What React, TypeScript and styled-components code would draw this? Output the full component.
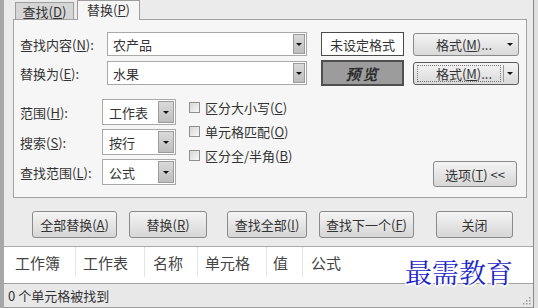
import React from "react";
import styled, { createGlobalStyle } from "styled-components";

const GlobalStyle = createGlobalStyle`
  html, body {
    margin: 0;
    padding: 0;
    background: #e0e0e0;
  }
  body {
    font-family: "Noto Sans CJK SC", "Liberation Sans", sans-serif;
    color: #333;
  }
`;

const Dialog = styled.div`
  position: relative;
  width: 534px;
  height: 308px;
  box-sizing: border-box;
  overflow: hidden;
  background: #ebebeb;
  border-left: 4px solid #a7a7a7;
  border-right: 1px solid #8a8a8a;
  display: flex;
  flex-direction: column;
`;

const TabStrip = styled.div`
  height: 19px;
  padding-left: 11px;
  display: flex;
  align-items: flex-end;
`;

const Tab = styled.div<{ $active?: boolean }>`
  position: relative;
  z-index: 1;
  box-sizing: border-box;
  height: ${(p) => (p.$active ? "20px" : "17px")};
  width: ${(p) => (p.$active ? "63px" : "59px")};
  margin-left: ${(p) => (p.$active ? "3px" : "0")};
  margin-bottom: ${(p) => (p.$active ? "-1px" : "0")};
  background: ${(p) => (p.$active ? "#f6f6f6" : "#d5d5d5")};
  border: 1px solid #9d9d9d;
  border-bottom: none;
  display: flex;
  align-items: center;
  justify-content: center;
  font-size: 13px;
  line-height: 1;
  padding-bottom: ${(p) => (p.$active ? "2px" : "0")};
`;

const U = styled.span`
  text-decoration: underline;
`;

const Panel = styled.div`
  box-sizing: border-box;
  margin-left: 9px;
  width: 514px;
  height: 179px;
  background: #f6f6f6;
  border: 1px solid #a2a2a2;
  padding: 12px 9px 0 6px;
  display: flex;
  flex-direction: column;
`;

const TopRow = styled.div<{ $gap?: number }>`
  display: flex;
  align-items: center;
  height: 24px;
  margin-top: ${(p) => p.$gap ?? 0}px;
`;

const Label = styled.div<{ $w: number }>`
  width: ${(p) => p.$w}px;
  flex: none;
  font-size: 13px;
  white-space: nowrap;
`;

const Combo = styled.div<{ $w: number; $h: number }>`
  box-sizing: border-box;
  width: ${(p) => p.$w}px;
  height: ${(p) => p.$h}px;
  flex: none;
  background: #fff;
  border: 1px solid #a9a9a9;
  display: flex;
  align-items: center;
  padding: 1px;
`;

const ComboText = styled.div<{ $pad: number }>`
  flex: 1;
  padding-left: ${(p) => p.$pad}px;
  font-size: 13px;
  white-space: nowrap;
`;

const DropButton = styled.div<{ $w: number }>`
  box-sizing: border-box;
  width: ${(p) => p.$w}px;
  height: 100%;
  background: linear-gradient(#dadada, #bdbdbd);
  border: 1px solid #9c9c9c;
  display: flex;
  align-items: center;
  justify-content: center;
`;

const Arrow = styled.div`
  width: 0;
  height: 0;
  border-left: 3px solid transparent;
  border-right: 3px solid transparent;
  border-top: 3px solid #111;
`;

const FormatBox = styled.div<{ $preview?: boolean }>`
  box-sizing: border-box;
  margin-left: 14px;
  width: 83px;
  height: ${(p) => (p.$preview ? "26px" : "24px")};
  flex: none;
  background: ${(p) => (p.$preview ? "#9c9c9c" : "#fff")};
  border: ${(p) => (p.$preview ? "2px solid #4f4f4f" : "1px solid #4a4a4a")};
  display: flex;
  align-items: center;
  justify-content: center;
  font-size: ${(p) => (p.$preview ? "15px" : "13px")};
  font-style: ${(p) => (p.$preview ? "italic" : "normal")};
  font-weight: ${(p) => (p.$preview ? 700 : 400)};
  color: ${(p) => (p.$preview ? "#2e2e2e" : "#333")};
  letter-spacing: ${(p) => (p.$preview ? "2px" : "0")};
`;

const FormatButton = styled.div<{ $default?: boolean }>`
  box-sizing: border-box;
  margin-left: 9px;
  width: 106px;
  height: 23px;
  flex: none;
  border-radius: 3px;
  border: 1px solid ${(p) => (p.$default ? "#5a5a5a" : "#8b8b8b")};
  background: linear-gradient(#f4f4f4, #d9d9d9);
  display: flex;
  align-items: center;
  padding: 2px 3px 2px 3px;
  font-size: 13px;
`;

const FormatCaption = styled.div<{ $focus?: boolean }>`
  flex: 1;
  height: 100%;
  box-sizing: border-box;
  display: flex;
  align-items: center;
  justify-content: center;
  padding-left: 10px;
  border: 1px dotted ${(p) => (p.$focus ? "#777" : "transparent")};
`;

const SplitArrow = styled.div<{ $split?: boolean }>`
  width: 11px;
  height: 100%;
  margin-left: 2px;
  display: flex;
  align-items: center;
  justify-content: center;
  border-left: 1px solid ${(p) => (p.$split ? "#9a9a9a" : "transparent")};
`;

const Options = styled.div`
  display: flex;
  margin-top: 14px;
  flex: 1;
  padding-bottom: 10px;
`;

const SelectCol = styled.div`
  display: flex;
  flex-direction: column;
  gap: 4px;
`;

const SelectRow = styled.div`
  display: flex;
  align-items: center;
  height: 26px;
`;

const CheckCol = styled.div`
  display: flex;
  flex-direction: column;
  gap: 12px;
  margin-left: 13px;
  padding-top: 2px;
`;

const CheckItem = styled.div`
  display: flex;
  align-items: center;
  height: 12px;
  font-size: 13px;
  white-space: nowrap;
`;

const Box = styled.div`
  box-sizing: border-box;
  width: 11px;
  height: 11px;
  border: 1px solid #8f8f8f;
  background: linear-gradient(135deg, #d8d8d8, #f7f7f7);
  margin-right: 5px;
`;

const PushButton = styled.div<{ $w: number; $ml?: number; $h?: number }>`
  box-sizing: border-box;
  width: ${(p) => p.$w}px;
  height: ${(p) => p.$h ?? 27}px;
  margin-left: ${(p) => p.$ml ?? 0}px;
  flex: none;
  border-radius: 3px;
  border: 1px solid #8a8a8a;
  background: linear-gradient(#f5f5f5, #d6d6d6);
  display: flex;
  align-items: center;
  justify-content: center;
  font-size: 13px;
  white-space: nowrap;
  color: #333;
`;

const OptionsButton = styled(PushButton)`
  margin-left: auto;
  align-self: flex-end;
`;

const ButtonRow = styled.div`
  display: flex;
  margin-top: 13px;
  padding-left: 28px;
`;

const ResultList = styled.div`
  margin-top: 8px;
  height: 38px;
  box-sizing: border-box;
  background: #fff;
  border-top: 1px solid #a9a9a9;
  border-bottom: 1px solid #a0a0a0;
`;

const HeaderRow = styled.div`
  display: flex;
  height: 30px;
`;

const HeaderCell = styled.div<{ $w?: number; $pad: number }>`
  box-sizing: border-box;
  width: ${(p) => (p.$w ? `${p.$w}px` : "auto")};
  flex: ${(p) => (p.$w ? "none" : "1")};
  padding-left: ${(p) => p.$pad}px;
  border-right: 1px solid ${(p) => (p.$w ? "#e4e4e4" : "transparent")};
  display: flex;
  align-items: center;
  font-size: 15px;
  color: #444;
  white-space: nowrap;
`;

const StatusBar = styled.div`
  height: 24px;
  box-sizing: border-box;
  background: #e8e8e8;
  border-bottom: 1px solid #9a9a9a;
  display: flex;
  align-items: center;
  padding-left: 4px;
  font-size: 13px;
  color: #333;
`;

const Watermark = styled.div`
  position: absolute;
  left: 401px;
  top: 258px;
  font-family: "Noto Serif CJK SC", "Noto Sans CJK SC", serif;
  font-size: 27px;
  line-height: 1;
  letter-spacing: 0px;
  color: #1d26c9;
  text-shadow: -1px -1px 0 #fff, 1px -1px 0 #fff, -1px 1px 0 #fff, 1px 1px 0 #fff,
    0 2px 0 #fff, 2px 0 0 #fff;
`;

const Grip = styled.svg`
  position: absolute;
  right: 2px;
  bottom: 3px;
`;

const selects = [
  { label: "范围", key: "H", value: "工作表" },
  { label: "搜索", key: "S", value: "按行" },
  { label: "查找范围", key: "L", value: "公式" },
];

const checks = [
  { label: "区分大小写", key: "C" },
  { label: "单元格匹配", key: "O" },
  { label: "区分全/半角", key: "B" },
];

const buttons = [
  { text: "全部替换", key: "A", w: 85, ml: 0 },
  { text: "替换", key: "R", w: 78, ml: 12 },
  { text: "查找全部", key: "I", w: 80, ml: 20 },
  { text: "查找下一个", key: "F", w: 95, ml: 12 },
  { text: "关闭", key: "", w: 77, ml: 22 },
];

const columns = [
  { title: "工作簿", w: 72, pad: 11 },
  { title: "工作表", w: 69, pad: 7 },
  { title: "名称", w: 53, pad: 8 },
  { title: "单元格", w: 69, pad: 7 },
  { title: "值", w: 36, pad: 6 },
  { title: "公式", pad: 8 },
];

const App: React.FC = () => {
  return (
    <>
      <GlobalStyle />
      <Dialog>
        <TabStrip>
          <Tab>
            查找(<U>D</U>)
          </Tab>
          <Tab $active>
            替换(<U>P</U>)
          </Tab>
        </TabStrip>
        <Panel>
          <TopRow>
            <Label $w={87}>
              查找内容(<U>N</U>):
            </Label>
            <Combo $w={200} $h={24}>
              <ComboText $pad={4}>农产品</ComboText>
              <DropButton $w={12}>
                <Arrow />
              </DropButton>
            </Combo>
            <FormatBox>未设定格式</FormatBox>
            <FormatButton>
              <FormatCaption>
                格式(<U>M</U>)...
              </FormatCaption>
              <SplitArrow>
                <Arrow />
              </SplitArrow>
            </FormatButton>
          </TopRow>
          <TopRow $gap={5}>
            <Label $w={87}>
              替换为(<U>E</U>):
            </Label>
            <Combo $w={200} $h={24}>
              <ComboText $pad={4}>水果</ComboText>
              <DropButton $w={12}>
                <Arrow />
              </DropButton>
            </Combo>
            <FormatBox $preview>预览</FormatBox>
            <FormatButton $default>
              <FormatCaption $focus>
                格式(<U>M</U>)...
              </FormatCaption>
              <SplitArrow $split>
                <Arrow />
              </SplitArrow>
            </FormatButton>
          </TopRow>
          <Options>
            <SelectCol>
              {selects.map((s) => (
                <SelectRow key={s.key}>
                  <Label $w={82}>
                    {s.label}(<U>{s.key}</U>):
                  </Label>
                  <Combo $w={74} $h={26}>
                    <ComboText $pad={5}>{s.value}</ComboText>
                    <DropButton $w={16}>
                      <Arrow />
                    </DropButton>
                  </Combo>
                </SelectRow>
              ))}
            </SelectCol>
            <CheckCol>
              {checks.map((c) => (
                <CheckItem key={c.key}>
                  <Box />
                  {c.label}(<U>{c.key}</U>)
                </CheckItem>
              ))}
            </CheckCol>
            <OptionsButton $w={84} $h={26}>
              选项(<U>T</U>)&nbsp;&lt;&lt;
            </OptionsButton>
          </Options>
        </Panel>
        <ButtonRow>
          {buttons.map((b) => (
            <PushButton key={b.text} $w={b.w} $ml={b.ml}>
              {b.text}
              {b.key && (
                <>
                  (<U>{b.key}</U>)
                </>
              )}
            </PushButton>
          ))}
        </ButtonRow>
        <ResultList>
          <HeaderRow>
            {columns.map((c) => (
              <HeaderCell key={c.title} $w={c.w} $pad={c.pad}>
                {c.title}
              </HeaderCell>
            ))}
          </HeaderRow>
        </ResultList>
        <StatusBar>0 个单元格被找到</StatusBar>
        <Watermark>最需教育</Watermark>
        <Grip width="10" height="10" viewBox="0 0 10 10">
          {[
            [8, 2],
            [8, 5],
            [5, 5],
            [8, 8],
            [5, 8],
            [2, 8],
          ].map(([x, y]) => (
            <rect key={`${x}-${y}`} x={x} y={y} width="1.5" height="1.5" fill="#9a9a9a" />
          ))}
        </Grip>
      </Dialog>
    </>
  );
};

export default App;
